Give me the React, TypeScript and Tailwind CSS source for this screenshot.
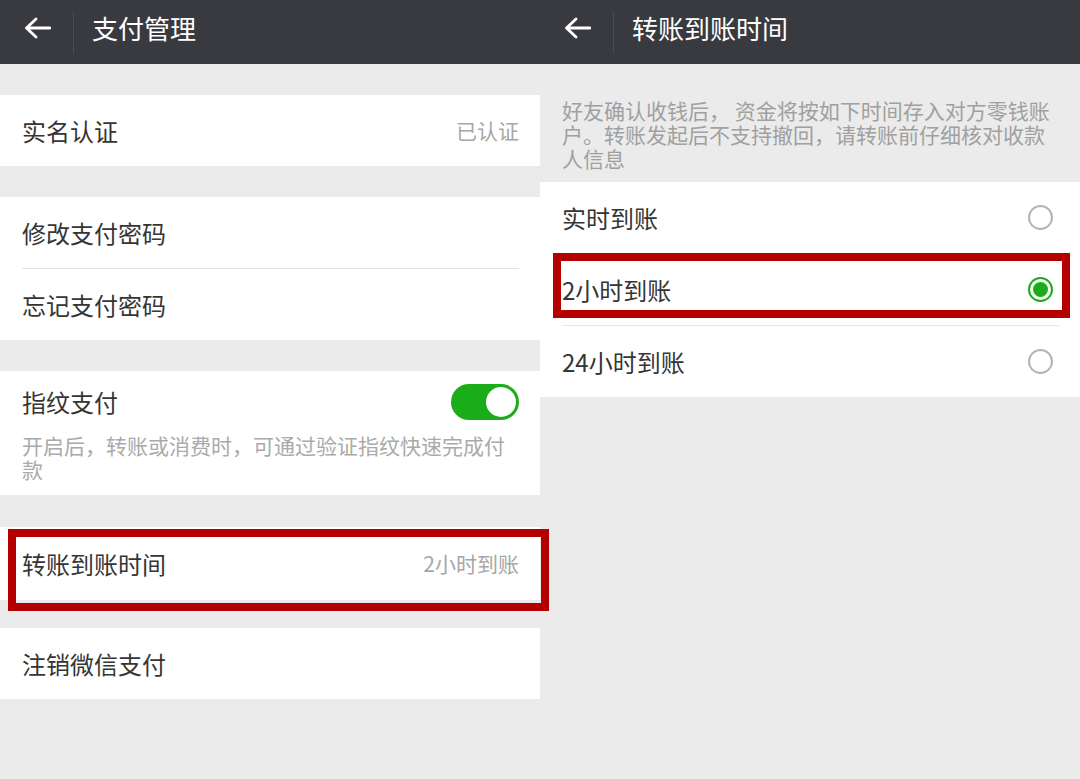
import React from 'react';

const FONT = { fontFamily: '"Noto Sans CJK SC", "Noto Sans", sans-serif' };

function BackArrow() {
  return (
    <svg width="27" height="22" viewBox="0 0 27 22" fill="none">
      <path d="M12 2 L2.5 11 L12 20 M2.5 11 H26" stroke="#ffffff" strokeWidth="2.8" strokeLinecap="round" strokeLinejoin="round" />
    </svg>
  );
}

function Header({ title }: { title: string }) {
  return (
    <div className="h-[64px] bg-[#393a3f] flex items-center pb-[8px] shrink-0">
      <div className="w-[73px] pl-[24px] flex items-center">
        <BackArrow />
      </div>
      <div className="w-px h-[42px] mt-[10px] bg-[#4b4c51]" />
      <div className="pl-[18px] text-[26px] text-white leading-none">{title}</div>
    </div>
  );
}

function Row({ label, value, divider }: { label: string; value?: string; divider?: boolean }) {
  return (
    <div className="bg-white">
      <div className="h-[71px] pl-[22px] pr-[21px] flex items-center justify-between">
        <span className="text-[24px] text-[#353535]">{label}</span>
        {value && <span className="text-[21px] text-[#a6a6a6]">{value}</span>}
      </div>
      {divider && <div className="ml-[22px] mr-[21px] h-px bg-[#e3e3e3]" />}
    </div>
  );
}

function Gap({ h }: { h: string }) {
  return <div className={h} />;
}

function Radio({ checked }: { checked?: boolean }) {
  if (checked) {
    return (
      <div className="w-[25px] h-[25px] rounded-full border-[2px] border-[#1aad19] flex items-center justify-center">
        <div className="w-[15px] h-[15px] rounded-full bg-[#1aad19]" />
      </div>
    );
  }
  return <div className="w-[25px] h-[25px] rounded-full border-[2px] border-[#b3b3b3]" />;
}

function OptionRow({ label, checked, divider, marked }: { label: string; checked?: boolean; divider?: boolean; marked?: boolean }) {
  return (
    <div className="bg-white relative">
      <div className="h-[71px] pl-[22px] pr-[27px] flex items-center justify-between">
        <span className="text-[24px] text-[#353535]">{label}</span>
        <Radio checked={checked} />
      </div>
      {divider && <div className="ml-[22px] mr-[21px] h-px bg-[#e8e8e8]" />}
      {marked && (
        <div className="absolute left-[13px] top-[-1px] w-[517px] h-[65px] border-[8px] border-[#b50000] z-10" />
      )}
    </div>
  );
}

function LeftPanel() {
  return (
    <div className="w-[540px] flex flex-col bg-[#ebebeb]">
      <Header title="支付管理" />
      <Gap h="h-[31px]" />
      <Row label="实名认证" value="已认证" />
      <Gap h="h-[31px]" />
      <Row label="修改支付密码" divider />
      <Row label="忘记支付密码" />
      <Gap h="h-[31px]" />
      <div className="bg-white pl-[22px] pr-[21px] pb-[14px]">
        <div className="h-[62px] flex items-center justify-between">
          <span className="text-[24px] text-[#353535]">指纹支付</span>
          <div className="w-[68px] h-[36px] rounded-full bg-[#1aad19] flex items-center justify-end pr-[3px]">
            <div className="w-[30px] h-[30px] rounded-full bg-white" />
          </div>
        </div>
        <p className="text-[21px] leading-[24px] text-[#aaaaaa]">开启后，转账或消费时，可通过验证指纹快速完成付款</p>
      </div>
      <Gap h="h-[32px]" />
      <div className="relative bg-white">
        <div className="h-[73px] pl-[22px] pr-[21px] flex items-center justify-between">
          <span className="text-[24px] text-[#353535]">转账到账时间</span>
          <span className="text-[21px] text-[#a6a6a6]">2小时到账</span>
        </div>
        <div className="absolute left-[8px] top-[2px] w-[541px] h-[82px] border-[8px] border-[#b50000] z-10" />
      </div>
      <Gap h="h-[28px]" />
      <Row label="注销微信支付" />
      <div className="flex-1" />
    </div>
  );
}

function RightPanel() {
  return (
    <div className="w-[540px] flex flex-col bg-[#ebebeb]">
      <Header title="转账到账时间" />
      <div className="pt-[34px] pb-[12px] pl-[22px] pr-[20px]">
        <p className="text-[21px] leading-[24px] text-[#a0a0a0]">
          好友确认收钱后， 资金将按如下时间存入对方零钱账户。转账发起后不支持撤回，请转账前仔细核对收款人信息
        </p>
      </div>
      <OptionRow label="实时到账" divider />
      <OptionRow label="2小时到账" checked divider marked />
      <OptionRow label="24小时到账" />
      <div className="flex-1" />
    </div>
  );
}

export default function App() {
  return (
    <div className="w-[1080px] h-[779px] flex overflow-hidden bg-[#ebebeb]" style={FONT}>
      <LeftPanel />
      <RightPanel />
    </div>
  );
}
